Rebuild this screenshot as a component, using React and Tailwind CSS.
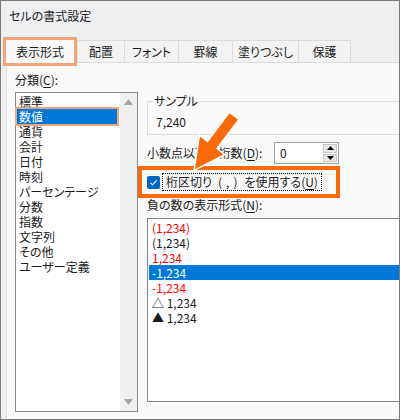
import React from 'react';

const categories = ['標準', '数値', '通貨', '会計', '日付', '時刻', 'パーセンテージ', '分数', '指数', '文字列', 'その他', 'ユーザー定義'];

const negatives = [
  { text: '(1,234)', color: 'text-[#ff0000]' },
  { text: '(1,234)', color: 'text-[#1a1a1a]' },
  { text: '1,234', color: 'text-[#ff0000]' },
  { text: '-1,234', selected: true },
  { text: '-1,234', color: 'text-[#ff0000]' },
  { text: '△ 1,234', color: 'text-[#1a1a1a]' },
  { text: '▲ 1,234', color: 'text-[#1a1a1a]' },
];

const tabs = [
  { label: '配置', w: 'w-[48px] border-l' },
  { label: 'フォント', w: 'w-[54px]' },
  { label: '罫線', w: 'w-[54px]' },
  { label: '塗りつぶし', w: 'w-[66px]' },
  { label: '保護', w: 'w-[52px]' },
];

function Arrow() {
  return (
    <svg className="absolute -left-px -top-px pointer-events-none" width="400" height="420" viewBox="0 0 400 420">
      <polygon
        points="195,169 223.5,154.5 216,148.6 238,119.5 229.5,113.3 207.6,142.6 200,136.6"
        fill="#fa6a0a"
        stroke="#ffffff"
        strokeWidth="3"
        strokeLinejoin="miter"
        paintOrder="stroke"
      />
    </svg>
  );
}

function Triangle({ up, className }) {
  return (
    <svg width="9" height="6" viewBox="0 0 9 6" className={className}>
      <polygon points={up ? '4.5,0 9,6 0,6' : '0,0 9,0 4.5,6'} fill="currentColor" />
    </svg>
  );
}

export default function App() {
  return (
    <div className="relative w-[400px] h-[420px] border border-[#7a7a7a] bg-[#eeeff1] flex flex-col overflow-hidden font-['Noto_Sans_CJK_JP',sans-serif] [font-feature-settings:'palt'] text-[12px] text-[#1a1a1a]">
      {/* タイトル */}
      <div className="h-[29px] pl-[8px] flex items-center leading-none">セルの書式設定</div>

      {/* タブ */}
      <div className="h-[32px] flex items-end pl-[5px]">
        <div className="relative z-10 w-[68px] h-[23px] -mb-px bg-[#f9f9f9] outline-3 outline-[#f5a47a] flex items-center justify-center leading-none">
          表示形式
        </div>
        <div className="flex ml-[3px]">
          {tabs.map(t => (
            <div key={t.label} className={`${t.w} h-[22px] border-t border-r border-[#dcdcdc] bg-[#f3f3f3] flex items-center justify-center leading-none`}>
              {t.label}
            </div>
          ))}
        </div>
      </div>

      {/* パネル */}
      <div className="flex-1 ml-[5px] w-[420px] bg-[#f9f9f9] border-l border-t border-[#dcdcdc] pl-[8px] pt-[9px] flex gap-[9px]">
        {/* 分類 */}
        <div className="w-[123px] flex flex-col">
          <div className="h-[16px] leading-[16px]">分類(<u className="underline-offset-2">C</u>):</div>
          <div className="mt-[4px] h-[320px] border border-[#848990] bg-white flex">
            <div className="flex-1 pt-px pl-px pr-[3px]">
              {categories.map(c => (
                <div
                  key={c}
                  className={`h-[15px] leading-[15px] pl-[2px] ${c === '数値' ? 'relative z-10 bg-[#0078d7] text-white outline-2 outline-[#f5a47a]' : ''}`}
                >
                  {c}
                </div>
              ))}
            </div>
            <div className="w-[17px] bg-[#f0f0f0] flex flex-col items-center justify-between pt-[6px] pb-[6px] text-[#a3a3a3]">
              <Triangle up />
              <Triangle />
            </div>
          </div>
        </div>

        {/* 右側 */}
        <div className="flex-1 flex flex-col">
          <div className="relative mt-[29px] h-[34px] border border-[#dcdcdc] pl-[8px] pt-[12px] leading-[16px]">
            <span className="absolute left-[5px] -top-[9px] px-px bg-[#f9f9f9] leading-[16px]">サンプル</span>
            7,240
          </div>

          <div className="mt-[7px] h-[22px] flex items-center">
            <div className="w-[127px] leading-none">小数点以下の桁数(<u className="underline-offset-2">D</u>):</div>
            <div className="w-[65px] h-[22px] border border-[#a0a0a0] bg-white flex">
              <div className="flex-1 pl-[5px] leading-[20px]">0</div>
              <div className="w-[16px] flex flex-col gap-px p-px">
                <div className="flex-1 bg-[#e8e8e8] border border-[#c8c8c8] flex items-center justify-center text-black">
                  <svg width="7" height="4" viewBox="0 0 7 4"><polygon points="3.5,0 7,4 0,4" fill="currentColor" /></svg>
                </div>
                <div className="flex-1 bg-[#e8e8e8] border border-[#c8c8c8] flex items-center justify-center text-black">
                  <svg width="7" height="4" viewBox="0 0 7 4"><polygon points="0,0 7,0 3.5,4" fill="currentColor" /></svg>
                </div>
              </div>
            </div>
          </div>

          <div className="mt-[6px] -ml-[5px] w-[194px] h-[24px] pl-[5px] flex items-center outline-4 outline-[#fa6a0a]">
            <div className="w-[13px] h-[13px] rounded-[2px] bg-[#0067c0] flex items-center justify-center">
              <svg width="9" height="9" viewBox="0 0 9 9">
                <path d="M1.5 4.8 L3.6 6.8 L7.6 2.4" fill="none" stroke="#ffffff" strokeWidth="1.1" />
              </svg>
            </div>
            <div className="ml-[2px] h-[18px] border border-dotted border-black px-[3px] leading-[16px] whitespace-nowrap flex">
              <span>桁区切り</span>
              <span className="ml-[6px]">(</span>
              <span className="ml-[4px]">,</span>
              <span className="ml-[4px] mr-[7px]">)</span>
              <span>を使用する(<u className="underline-offset-2">U</u>)</span>
            </div>
          </div>

          <div className="mt-[4px] h-[14px] leading-[14px]">負の数の表示形式(<u className="underline-offset-2">N</u>):</div>
          <div className="mt-[6px] h-[184px] border border-[#848990] bg-white pt-px px-px">
            {negatives.map((n, i) => (
              <div
                key={i}
                className={`h-[15px] leading-[15px] pl-[3px] whitespace-pre ${n.selected ? 'bg-[#0078d7] text-white' : n.color}`}
              >
                {n.text}
              </div>
            ))}
          </div>
        </div>
      </div>

      <Arrow />
    </div>
  );
}
